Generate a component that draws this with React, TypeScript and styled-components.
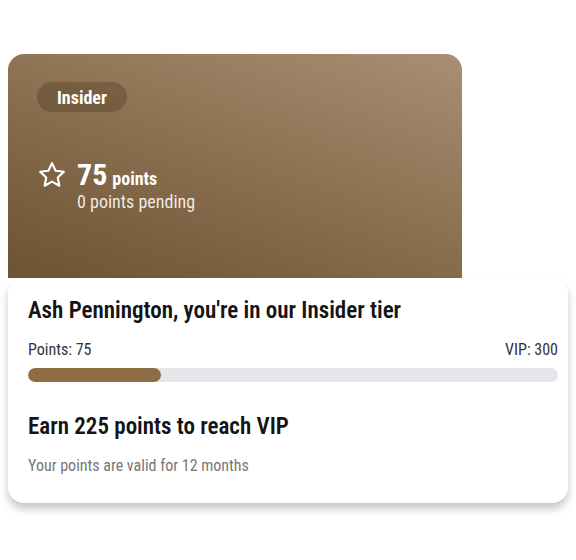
import React from "react";
import styled, { createGlobalStyle } from "styled-components";

const Global = createGlobalStyle`
  html, body { margin: 0; padding: 0; background: #ffffff; }
  body { font-family: "Roboto", "DejaVu Sans Condensed", sans-serif; font-stretch: 80%; }
`;

const Page = styled.div`
  width: 576px;
  height: 560px;
  padding: 54px 8px 0 8px;
  box-sizing: border-box;
  display: flex;
  flex-direction: column;
`;

const Hero = styled.div`
  width: 454px;
  height: 224px;
  box-sizing: border-box;
  border-radius: 16px 16px 0 0;
  background: linear-gradient(200deg, #a98f73 0%, #8a6f50 50%, #6c5333 100%);
  padding: 28px 0 0 29px;
  display: flex;
  flex-direction: column;
  color: #ffffff;
`;

const Badge = styled.span`
  align-self: flex-start;
  height: 30px;
  padding: 0 20px;
  border-radius: 15px;
  background: rgba(60, 40, 15, 0.28);
  display: flex;
  align-items: center;
  font-size: 18px;
  font-weight: 700;
  color: #ffffff;
`;

const PointsRow = styled.div`
  margin-top: 46px;
  display: flex;
  align-items: flex-start;
  gap: 10px;
`;

const StarIcon = styled.svg`
  width: 30px;
  height: 30px;
  margin-top: 2px;
  flex: none;
`;

const PointsCol = styled.div`
  display: flex;
  flex-direction: column;
`;

const PointsLine = styled.div`
  display: flex;
  align-items: baseline;
  gap: 5px;
`;

const Big = styled.span`
  font-size: 30px;
  font-weight: 700;
  line-height: 34px;
`;

const Unit = styled.span`
  font-size: 18px;
  font-weight: 700;
`;

const Pending = styled.div`
  font-size: 18px;
  line-height: 20px;
  color: rgba(255, 255, 255, 0.88);
`;

const Card = styled.div`
  width: 560px;
  box-sizing: border-box;
  background: #ffffff;
  border-radius: 16px;
  box-shadow: 0 6px 8px rgba(0, 0, 0, 0.22);
  padding: 19px 10px 28px 20px;
  display: flex;
  flex-direction: column;
`;

const Title = styled.div`
  font-size: 23px;
  font-weight: 600;
  color: #141414;
  line-height: 28px;
`;

const LabelRow = styled.div`
  margin-top: 15px;
  display: flex;
  justify-content: space-between;
  font-size: 16px;
  line-height: 19px;
  color: #333333;
`;

const Track = styled.div`
  margin-top: 9px;
  height: 14px;
  border-radius: 7px;
  background: #e5e6ea;
  overflow: hidden;
`;

const Fill = styled.div`
  height: 100%;
  border-radius: 7px;
  background: #8f6d44;
`;

const Sub = styled.div`
  margin-top: 31px;
  font-size: 23px;
  font-weight: 600;
  color: #141414;
  line-height: 28px;
`;

const Note = styled.div`
  margin-top: 15px;
  font-size: 16px;
  line-height: 19px;
  color: #777777;
`;

export default function App() {
  const points = 75;
  const target = 300;
  return (
    <>
      <Global />
      <Page>
        <Hero>
          <Badge>Insider</Badge>
          <PointsRow>
            <StarIcon viewBox="0 0 24 24" fill="none" stroke="#ffffff" strokeWidth="1.7" strokeLinejoin="round">
              <path d="M12 2.5l2.9 6.1 6.6.8-4.9 4.6 1.3 6.6L12 17.3l-5.9 3.3 1.3-6.6-4.9-4.6 6.6-.8z" />
            </StarIcon>
            <PointsCol>
              <PointsLine>
                <Big>{points}</Big>
                <Unit>points</Unit>
              </PointsLine>
              <Pending>0 points pending</Pending>
            </PointsCol>
          </PointsRow>
        </Hero>
        <Card>
          <Title>Ash Pennington, you're in our Insider tier</Title>
          <LabelRow>
            <span>Points: {points}</span>
            <span>VIP: {target}</span>
          </LabelRow>
          <Track>
            <Fill style={{ width: `${(points / target) * 100}%` }} />
          </Track>
          <Sub>Earn {target - points} points to reach VIP</Sub>
          <Note>Your points are valid for 12 months</Note>
        </Card>
      </Page>
    </>
  );
}
